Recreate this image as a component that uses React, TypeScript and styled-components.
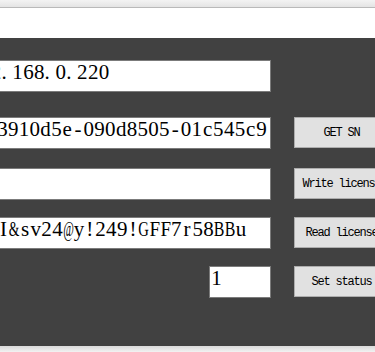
import React from 'react';
import styled, {createGlobalStyle} from 'styled-components';

const Global = createGlobalStyle`
  html, body {
    margin: 0;
    padding: 0;
    background: #ffffff;
    overflow: hidden;
  }
  #root {
    width: 375px;
    height: 352px;
    overflow: hidden;
  }
`

const Window = styled.div`
  display: flex;
  flex-direction: column;
  width: 375px;
  height: 352px;
`
const TopStrip = styled.div`
  height: 7px;
  background: linear-gradient(#f3f3f3, #e4e4e4);
  border-bottom: 1px solid #b9b9b9;
`
const WhiteBar = styled.div`
  height: 30px;
  background: #ffffff;
`
const Panel = styled.div`
  height: 308px;
  background: #414141;
  padding-top: 22px;
  box-sizing: border-box;
  overflow: hidden;
`
const BottomStrip = styled.div`
  flex: 1;
  background: linear-gradient(#d9d9d9, #f2f2f2);
`
const Form = styled.div`
  display: flex;
  flex-direction: column;
  margin-left: -34px;
  width: 430px;
`
const Row = styled.div<{$top: number}>`
  display: flex;
  align-items: flex-start;
  gap: 23px;
  margin-top: ${p => p.$top}px;
`
const Slot = styled.div`
  width: 305px;
  display: flex;
  justify-content: flex-end;
  flex: none;
`
const Box = styled.div<{$w: number}>`
  width: ${p => p.$w}px;
  height: 32px;
  box-sizing: border-box;
  border: 1px solid #7b7b7b;
  background: #ffffff;
  overflow: hidden;
  padding: 2px 0 0 2px;
  font-family: "Liberation Serif", "Times New Roman", serif;
  font-size: 21px;
  line-height: 19px;
  color: #000000;
`
const Line = styled.div<{$shift: number}>`
  display: flex;
  white-space: nowrap;
  margin-left: ${p => p.$shift}px;
`
const Cell = styled.span<{$left: boolean}>`
  display: inline-flex;
  justify-content: ${p => p.$left ? 'flex-start' : 'center'};
  flex: none;
  width: 10.8px;
`
const Glyph = styled.span<{$scale: number}>`
  display: inline-block;
  transform: scaleX(${p => p.$scale});
`
const Button = styled.div`
  width: 95px;
  height: 31px;
  flex: none;
  box-sizing: border-box;
  border: 1px solid #adadad;
  background: #e1e1e1;
  display: flex;
  align-items: center;
  justify-content: center;
  font-family: "Liberation Mono", "Courier New", monospace;
  font-size: 12px;
  letter-spacing: -1.2px;
  white-space: pre;
  color: #000000;
`

// rough advance of the wide serif glyphs at 21px, squeezed into one cell
const wide: Record<string, number> = {'&': 16.3, '@': 19.3, 'G': 15.2, 'F': 11.7, 'B': 14}

type FieldProps = {
    text: string
    shift: number
    width?: number
}

const Field = ({text, shift, width = 305}: FieldProps) => (
    <Slot>
        <Box $w={width}>
            <Line $shift={shift}>
                {text.split('').map((ch, i) => (
                    <Cell key={i} $left={ch === '.'}>
                        <Glyph $scale={wide[ch] ? 10.6 / wide[ch] : 1}>{ch}</Glyph>
                    </Cell>
                ))}
            </Line>
        </Box>
    </Slot>
)

const App = () => {
    return (
        <Window>
            <Global/>
            <TopStrip/>
            <WhiteBar/>
            <Panel>
                <Form>
                    <Row $top={0}>
                        <Field text="192.168.0.220" shift={0}/>
                    </Row>
                    <Row $top={25}>
                        <Field text="3910d5e-090d8505-01c545c9" shift={28}/>
                        <Button>GET SN</Button>
                    </Row>
                    <Row $top={19}>
                        <Field text="" shift={0}/>
                        <Button>Write license</Button>
                    </Row>
                    <Row $top={17}>
                        <Field text="I&sv24@y!249!GFF7r58BBu" shift={29}/>
                        <Button>Read license</Button>
                    </Row>
                    <Row $top={17}>
                        <Field text="1" shift={-1} width={62}/>
                        <Button>Set status</Button>
                    </Row>
                </Form>
            </Panel>
            <BottomStrip/>
        </Window>
    );
}

export default App;
